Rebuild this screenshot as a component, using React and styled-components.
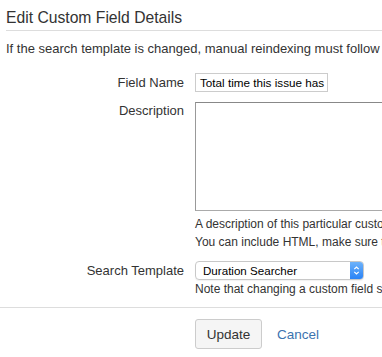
import styled, { createGlobalStyle } from "styled-components";

const Global = createGlobalStyle`
  body {
    margin: 0;
    overflow: hidden;
    background: #fff;
    font-family: "Liberation Sans", Arial, sans-serif;
    color: #333;
  }
`;

const Page = styled.div`
  width: 382px;
  height: 357px;
  overflow: hidden;
`;

const Top = styled.div`
  padding: 8px 0 0 5px;
`;

const Title = styled.h2`
  margin: 0 0 0 1px;
  font-size: 15.7px;
  line-height: 20px;
  font-weight: normal;
  color: #333;
  padding-bottom: 2px;
  border-bottom: 1px solid #ddd;
`;

const Intro = styled.p`
  margin: 8px 0 0 1px;
  font-size: 13px;
  line-height: 20px;
  white-space: nowrap;
`;

const Form = styled.div`
  display: grid;
  grid-template-columns: 184px 300px;
  column-gap: 11px;
  align-items: start;
  margin-top: 14px;
`;

const Label = styled.label`
  text-align: right;
  font-size: 13px;
  line-height: 18px;
  padding-top: ${(p) => p.$top || 0}px;
  white-space: nowrap;
`;

const Field = styled.div`
  display: flex;
  flex-direction: column;
  margin-bottom: ${(p) => p.$gap || 0}px;
`;

const TextInput = styled.div`
  width: 127px;
  height: 17px;
  border: 1px solid #ccc;
  font-size: 11.7px;
  line-height: 18px;
  padding-left: 4px;
  box-sizing: content-box;
  white-space: nowrap;
  overflow: hidden;
  color: #000;
`;

const TextArea = styled.div`
  width: 300px;
  height: 107px;
  border: 1px solid #aaa;
  border-top-color: #888;
  border-left-color: #999;
`;

const Help = styled.div`
  font-size: 12px;
  line-height: 18px;
  white-space: nowrap;
  margin-top: ${(p) => p.$top || 0}px;
`;

const SelectBox = styled.div`
  display: flex;
  width: 169px;
  height: 19px;
  border: 1px solid #c8c8c8;
  border-radius: 4px;
  box-sizing: border-box;
  overflow: hidden;
  box-shadow: 0 1px 1px rgba(0, 0, 0, 0.06);
`;

const SelectText = styled.span`
  flex: 1;
  font-size: 11.6px;
  line-height: 17px;
  padding-left: 7px;
  color: #000;
`;

const Stepper = styled.span`
  width: 13px;
  display: flex;
  align-items: center;
  justify-content: center;
  background: linear-gradient(#6db2fa, #2a83f6);
`;

const Footer = styled.div`
  margin-top: 9px;
  border-top: 1px solid #ddd;
  display: flex;
  align-items: center;
  gap: 15px;
  padding: 11px 0 0 195px;
`;

const Button = styled.button`
  height: 30px;
  width: 67px;
  border: 1px solid #ccc;
  border-radius: 3px;
  background: #f5f5f5;
  font-family: inherit;
  font-size: 13.5px;
  color: #333;
  padding: 0;
`;

const Link = styled.a`
  color: #3b73af;
  font-size: 13.5px;
  text-decoration: none;
`;

export default function App() {
  return (
    <Page>
      <Global />
      <Top>
        <Title>Edit Custom Field Details</Title>
        <Intro>If the search template is changed, manual reindexing must follow</Intro>
      </Top>
      <Form>
        <Label $top={1}>Field Name</Label>
        <Field $gap={10}>
          <TextInput>Total time this issue has</TextInput>
        </Field>
        <Label $top={0}>Description</Label>
        <Field $gap={10}>
          <TextArea />
          <Help $top={4}>A description of this particular custom field.</Help>
          <Help>You can include HTML, make sure to close all your tags.</Help>
        </Field>
        <Label $top={1}>Search Template</Label>
        <Field>
          <SelectBox>
            <SelectText>Duration Searcher</SelectText>
            <Stepper>
              <svg width="7" height="11" viewBox="0 0 7 11">
                <path d="M1.3 4.2 L3.5 2 L5.7 4.2 M1.3 6.8 L3.5 9 L5.7 6.8" fill="none" stroke="#fff" strokeWidth="1.2" />
              </svg>
            </Stepper>
          </SelectBox>
          <Help>Note that changing a custom field searcher may require a reindex.</Help>
        </Field>
      </Form>
      <Footer>
        <Button>Update</Button>
        <Link href="#">Cancel</Link>
      </Footer>
    </Page>
  );
}
